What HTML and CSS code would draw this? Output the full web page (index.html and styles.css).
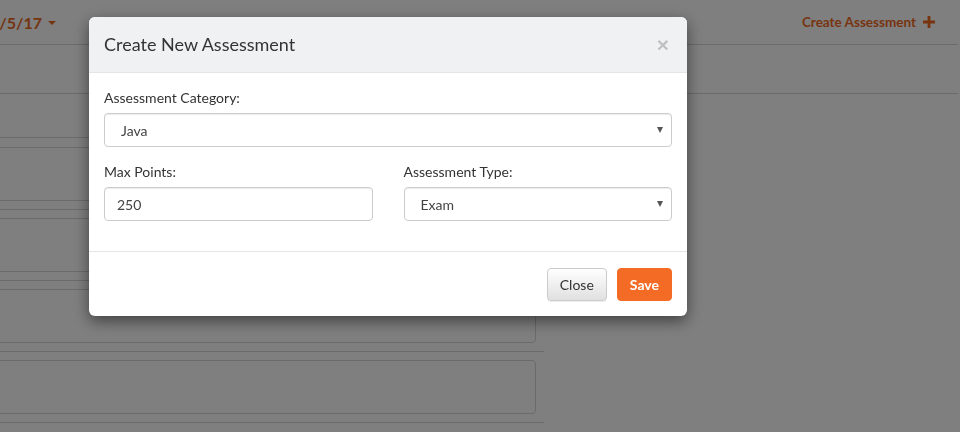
FILE: index.html
```html
<!DOCTYPE html>
<html lang="en">
<head>
<meta charset="utf-8">
<title>Create New Assessment</title>
<link rel="stylesheet" href="styles.css">
</head>
<body>
<div class="page">
  <header class="topbar">
    <div class="date">9/5/17 <span class="caret"></span></div>
    <a class="create" href="#">Create Assessment
      <svg class="plus" width="12" height="12" viewBox="0 0 12 12" aria-hidden="true"><path d="M4.6 0h2.8v4.6H12v2.8H7.4V12H4.6V7.4H0V4.6h4.6z" fill="currentColor"/></svg>
    </a>
  </header>
  <div class="subbar"></div>
  <div class="list">
    <div class="sep"></div>
    <div class="item first"></div>
    <div class="sep"></div>
    <div class="item"></div>
    <div class="sep"></div>
    <div class="item"></div>
    <div class="sep"></div>
    <div class="item"></div>
    <div class="sep"></div>
  </div>
</div>

<div class="backdrop"></div>

<div class="modal">
  <div class="modal-dialog">
    <div class="modal-header">
      <h4 class="modal-title">Create New Assessment</h4>
      <button class="close" type="button">&times;</button>
    </div>
    <div class="modal-body">
      <div class="form-group">
        <label class="label">Assessment Category:</label>
        <div class="select-wrap">
          <select class="form-control select"><option>Java</option></select>
        </div>
      </div>
      <div class="form-row">
        <div class="form-group">
          <label class="label">Max Points:</label>
          <input class="form-control" type="text" value="250">
        </div>
        <div class="form-group">
          <label class="label">Assessment Type:</label>
          <div class="select-wrap">
            <select class="form-control select"><option>Exam</option></select>
          </div>
        </div>
      </div>
    </div>
    <div class="modal-footer">
      <button class="btn btn-default" type="button">Close</button>
      <button class="btn btn-primary" type="button">Save</button>
    </div>
  </div>
</div>
</body>
</html>
```

FILE: styles.css
```css
* { box-sizing: border-box; }

html, body {
  margin: 0;
  padding: 0;
  height: 100%;
  overflow: hidden;
}

body {
  background: #fff;
  font-family: "Lato", "Noto Sans", sans-serif;
  font-size: 14px;
  color: #333;
}

.page {
  margin-left: -40px;
  width: 998px;
}

.topbar {
  height: 45px;
  border-bottom: 1px solid #d6d6d6;
  display: flex;
  align-items: center;
  justify-content: space-between;
  padding: 0 23px 0 30px;
}

.date {
  color: #e8681f;
  font-size: 16px;
  font-weight: 700;
  display: flex;
  align-items: center;
  gap: 6px;
}

.caret {
  width: 0;
  height: 0;
  border-left: 4px solid transparent;
  border-right: 4px solid transparent;
  border-top: 4px solid #e8681f;
  margin-top: 2px;
}

.create {
  color: #f0691f;
  font-weight: 700;
  font-size: 13.5px;
  text-decoration: none;
  display: flex;
  align-items: center;
  gap: 7px;
}

.plus { display: block; }

.subbar {
  height: 49px;
  border-bottom: 1px solid #d6d6d6;
}

.list {
  width: 584px;
  padding-top: 43px;
}

.sep {
  height: 1px;
  background: #d6d6d6;
}

.item {
  height: 54px;
  margin: 8px 8px 8px 0;
  border: 1px solid #d6d6d6;
  border-radius: 4px;
}

.item.first {
  margin-top: 9px;
}

.backdrop {
  position: fixed;
  inset: 0;
  background: rgba(0, 0, 0, 0.5);
}

.modal {
  position: fixed;
  inset: 0;
}

.modal-dialog {
  margin: 17px 0 0 89px;
  width: 598px;
  background: #fff;
  border-radius: 6px;
  box-shadow: 0 5px 15px rgba(0, 0, 0, 0.5);
  overflow: hidden;
}

.modal-header {
  background: #f0f1f3;
  border-bottom: 1px solid #e5e5e5;
  height: 56px;
  padding: 0 15px;
  display: flex;
  align-items: center;
  justify-content: space-between;
}

.modal-title {
  margin: 0;
  font-size: 18px;
  font-weight: 400;
  color: #333;
  padding-bottom: 1px;
}

.close {
  border: 0;
  background: transparent;
  padding: 0;
  font-family: "Liberation Sans", Arial, sans-serif;
  font-size: 21px;
  font-weight: 700;
  color: #000;
  opacity: 0.2;
  line-height: 1;
  margin-right: 3px;
}

.modal-body {
  padding: 15px;
}

.form-row {
  display: grid;
  grid-template-columns: 1fr 1fr;
  column-gap: 31px;
}

.form-group {
  margin-bottom: 15px;
}

.label {
  display: block;
  line-height: 20px;
  margin-bottom: 5px;
  font-size: 14px;
  color: #333;
}

.form-control {
  display: block;
  width: 100%;
  height: 34px;
  padding: 6px 12px;
  font-family: inherit;
  font-size: 14px;
  color: #444;
  background: #fff;
  border: 1px solid #ccc;
  border-radius: 4px;
  box-shadow: inset 0 1px 1px rgba(0, 0, 0, 0.075);
  outline: none;
}

.select-wrap {
  position: relative;
}

.select {
  appearance: none;
  -webkit-appearance: none;
  padding-left: 16px;
}

.select-wrap::after {
  content: "";
  position: absolute;
  right: 9px;
  top: 14px;
  width: 0;
  height: 0;
  border-left: 3.5px solid transparent;
  border-right: 3.5px solid transparent;
  border-top: 6px solid #555;
  pointer-events: none;
}

.modal-footer {
  border-top: 1px solid #e5e5e5;
  padding: 16px 15px 15px;
  display: flex;
  justify-content: flex-end;
  gap: 10px;
}

.btn {
  height: 33px;
  padding: 0 12px;
  font-family: inherit;
  font-size: 14px;
  border-radius: 4px;
  border: 1px solid #ccc;
  line-height: 1;
}

.btn-default {
  color: #333;
  background: linear-gradient(#fff, #e0e0e0);
  border-color: #ccc;
  box-shadow: 0 1px 1px rgba(0, 0, 0, 0.075);
}

.btn-primary {
  color: #fff;
  background: #f36b24;
  border-color: #f36b24;
  font-weight: 700;
}
```
